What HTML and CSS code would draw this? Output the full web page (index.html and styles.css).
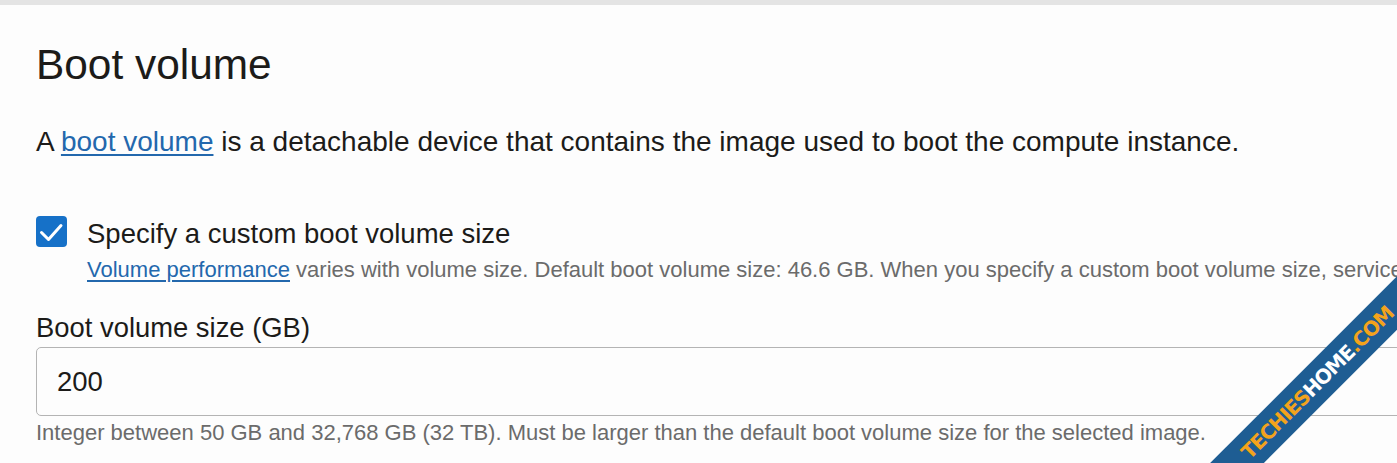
FILE: index.html
```html
<!DOCTYPE html>
<html lang="en">
<head>
<meta charset="utf-8">
<title>Boot volume</title>
<link rel="stylesheet" href="styles.css">
</head>
<body>
<div class="topbar"></div>
<section class="section">
  <h1 class="title">Boot volume</h1>
  <p class="intro">A <a class="link" href="#">boot volume</a> is a detachable device that contains the image used to boot the compute instance.</p>
  <div class="check-row">
    <span class="checkbox">
      <svg width="31" height="31" viewBox="0 0 31 31"><path d="M5.5 16.5 L12.5 23.5 L25 9.5" fill="none" stroke="#fff" stroke-width="3" stroke-linecap="round" stroke-linejoin="round"/></svg>
    </span>
    <div class="check-text">
      <div class="check-label">Specify a custom boot volume size</div>
      <div class="check-help"><a class="link" href="#">Volume performance</a> varies with volume size. Default boot volume size: 46.6 GB. When you specify a custom boot volume size, service limits apply.</div>
    </div>
  </div>
  <label class="field-label">Boot volume size (GB)</label>
  <div class="input">200</div>
  <div class="hint">Integer between 50 GB and 32,768 GB (32 TB). Must be larger than the default boot volume size for the selected image.</div>
</section>
<div class="watermark"><span class="wm-o">TECHIES</span><span class="wm-w">HOME</span><span class="wm-o">.COM</span></div>
</body>
</html>
```
FILE: styles.css
```css
html, body {
  margin: 0;
  padding: 0;
  background: #fdfdfd;
  overflow: hidden;
  width: 1397px;
  height: 463px;
  position: relative;
  font-family: "Liberation Sans", Arial, sans-serif;
  color: #1c1b19;
}
.topbar {
  height: 5px;
  background: #e4e4e4;
}
.section {
  padding-left: 36px;
}
.title {
  font-size: 42.4px;
  font-weight: 400;
  line-height: 1.2;
  margin: 35px 0 0;
}
.intro {
  font-size: 28px;
  line-height: 1.2;
  margin: 34.5px 0 0;
  white-space: nowrap;
}
.link {
  color: #2368ad;
  text-decoration: underline;
  text-underline-offset: 3px;
}
.check-row {
  display: flex;
  gap: 20px;
  margin-top: 58px;
}
.checkbox {
  flex: none;
  width: 31px;
  height: 31px;
  border-radius: 4px;
  background: #1671c8;
  margin-top: -1px;
  display: block;
}
.checkbox svg { display: block; }
.check-text { min-width: 0; }
.check-label {
  font-size: 27.5px;
  line-height: 1.2;
}
.check-help {
  font-size: 22px;
  line-height: 1.2;
  margin-top: 7px;
  color: #6b6b6b;
  white-space: nowrap;
}
.field-label {
  display: block;
  font-size: 27.4px;
  line-height: 1.2;
  margin-top: 28.5px;
}
.input {
  margin-top: 2.5px;
  width: 1420px;
  height: 67px;
  border: 1px solid #b4b4b4;
  border-radius: 5px;
  box-sizing: content-box;
  display: flex;
  align-items: center;
  padding-left: 20px;
  font-size: 27.5px;
  color: #1c1b19;
  background: #fdfdfd;
}
.hint {
  font-size: 22px;
  line-height: 1.2;
  margin-top: 4px;
  color: #6b6b6b;
  white-space: nowrap;
}
.watermark {
  position: absolute;
  left: 1114px;
  top: 367px;
  width: 420px;
  height: 38px;
  box-sizing: border-box;
  padding-right: 10px;
  transform: rotate(-45deg);
  transform-origin: 200px 19px;
  background: #1e5d93;
  display: flex;
  align-items: center;
  justify-content: center;
  font-family: "DejaVu Sans", sans-serif;
  font-weight: 700;
  font-size: 20px;
  letter-spacing: -1px;
}
.wm-o { color: #f3a31c; }
.wm-w { color: #ffffff; }
```
